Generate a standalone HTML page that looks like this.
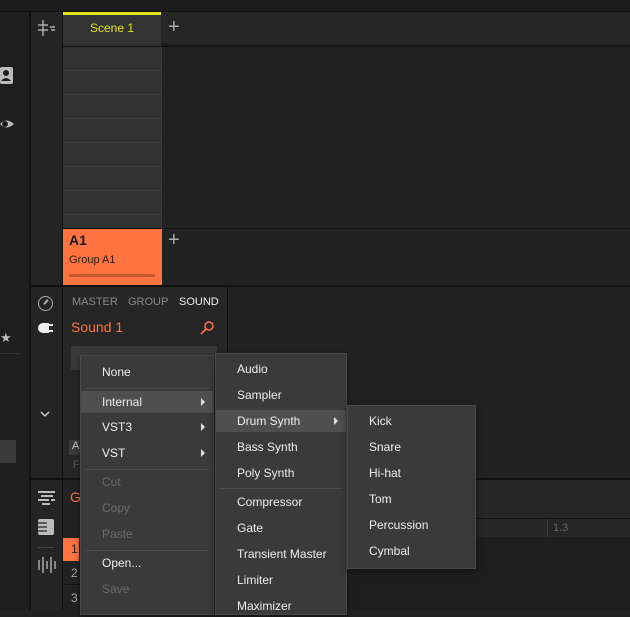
<!DOCTYPE html>
<html><head><style>
*{margin:0;padding:0;box-sizing:border-box}
body{width:630px;height:610px;overflow:hidden;background:#222;font-family:"Liberation Sans",Arial,sans-serif;position:relative}
.a{position:absolute}
.menu{position:absolute;background:#3a3a3a;border:1px solid #4a4a4a;box-shadow:0 2px 6px rgba(0,0,0,.5)}
.it{position:absolute;left:0;right:0;height:22px;color:#eee;font-size:12px;line-height:22px;padding-left:21px}
.it.hl{background:#4f4f4f}
.it.dis{color:#6a6a6a}
.sep{position:absolute;left:4px;right:4px;height:1px;background:#4c4c4c}
.tri{position:absolute;right:8px;top:7px;width:0;height:0;border-left:4px solid #ddd;border-top:4px solid transparent;border-bottom:4px solid transparent}
</style></head><body>
<div class="a" style="left:0;top:0;width:630px;height:11px;background:#1c1c1c"></div>
<div class="a" style="left:0;top:11px;width:630px;height:1px;background:#0e0e0e"></div>
<div class="a" style="left:0;top:12px;width:29px;height:598px;background:#1e1e1e"></div>
<div class="a" style="left:29px;top:12px;width:2px;height:598px;background:#111"></div>
<div class="a" style="left:31px;top:12px;width:31px;height:598px;background:#242424"></div>
<div class="a" style="left:62px;top:12px;width:1px;height:598px;background:#111"></div>
<svg class="a" style="left:0;top:66px" width="14" height="20"><rect x="0" y="1" width="13" height="17" rx="2" fill="#bbb"/><circle cx="6" cy="7" r="3" fill="#1e1e1e"/><path d="M1 15Q6 9 11 15Z" fill="#1e1e1e"/></svg>
<svg class="a" style="left:0;top:116px" width="14" height="16"><path d="M0 8Q6 1 14 8Q6 15 0 8Z" fill="#bbb"/><circle cx="5" cy="8" r="3" fill="#1e1e1e"/></svg>
<div class="a" style="left:0;top:330px;color:#bbb;font-size:13px">★</div>
<div class="a" style="left:0;top:353px;width:20px;height:1px;background:#333"></div>
<div class="a" style="left:0;top:440px;width:16px;height:23px;background:#3a3a3a"></div>
<svg class="a" style="left:36px;top:19px" width="20" height="18"><path d="M7 1V17M2 6H12M2 11H12M14 8H19M15 11H19" stroke="#aaa" stroke-width="1.5"/></svg>
<div class="a" style="left:38px;top:296px;width:15px;height:15px;border:1.5px solid #aaa;border-radius:50%"></div>
<div class="a" style="left:45px;top:299px;width:2px;height:6px;background:#aaa;transform:rotate(40deg)"></div>
<div class="a" style="left:38px;top:323px;width:11px;height:10px;background:#eee;border-radius:5px 0 0 5px"></div>
<div class="a" style="left:48px;top:324px;width:5px;height:2px;background:#eee"></div>
<div class="a" style="left:48px;top:330px;width:5px;height:2px;background:#eee"></div>
<svg class="a" style="left:40px;top:410px" width="10" height="8"><path d="M1 2L5 6L9 2" stroke="#ccc" stroke-width="1.5" fill="none"/></svg>
<svg class="a" style="left:37px;top:490px" width="20" height="16"><path d="M1 2H18M4 6H16M1 10H12M14 10H18M5 14H13" stroke="#eee" stroke-width="1.6"/></svg>
<div class="a" style="left:38px;top:519px;width:16px;height:16px;background:#bbb;border-radius:2px"></div>
<svg class="a" style="left:38px;top:521px" width="12" height="12"><path d="M0 2H9M0 6H9M0 10H9" stroke="#242424" stroke-width="1.3"/></svg>
<div class="a" style="left:38px;top:547px;width:16px;height:1px;background:#444"></div>
<svg class="a" style="left:37px;top:556px" width="20" height="18"><path d="M2 4V14M6 1V17M10 5V13M14 1V17M18 5V13" stroke="#aaa" stroke-width="1.5"/></svg>
<div class="a" style="left:63px;top:12px;width:567px;height:274px;background:#222"></div>
<div class="a" style="left:63px;top:12px;width:98px;height:34px;background:#333;border-top:3px solid #e6e61e"></div>
<div class="a" style="left:63px;top:21px;width:98px;text-align:center;color:#e6e61e;font-size:12px">Scene 1</div>
<div class="a" style="left:161px;top:12px;width:469px;height:32px;background:#262626"></div>
<div class="a" style="left:161px;top:44px;width:469px;height:3px;background:#1a1a1a"></div>
<div class="a" style="left:168px;top:14px;color:#aaa;font-size:20px;line-height:26px">+</div>
<div class="a" style="left:63px;top:46px;width:567px;height:1px;background:#111"></div>
<div class="a" style="left:63px;top:47px;width:98px;height:181px;background:repeating-linear-gradient(#323232 0 23px,#3e3e3e 23px 24px)"></div>
<div class="a" style="left:161px;top:47px;width:1px;height:181px;background:#3a3a3a"></div>
<div class="a" style="left:63px;top:228px;width:567px;height:1px;background:#111"></div>
<div class="a" style="left:63px;top:229px;width:99px;height:56px;background:#ff7340"></div>
<div class="a" style="left:69px;top:232px;color:#1a1a1a;font-size:14px;font-weight:bold">A1</div>
<div class="a" style="left:69px;top:254px;color:#2a1a10;font-size:11px">Group A1</div>
<div class="a" style="left:69px;top:274px;width:86px;height:3px;background:#c85a30"></div>
<div class="a" style="left:168px;top:229px;color:#aaa;font-size:20px;line-height:22px">+</div>
<div class="a" style="left:31px;top:285px;width:599px;height:2px;background:#111"></div>
<div class="a" style="left:63px;top:287px;width:164px;height:192px;background:#262626"></div>
<div class="a" style="left:227px;top:287px;width:1px;height:192px;background:#111"></div>
<div class="a" style="left:72px;top:296px;color:#8a8a8a;font-size:11px;word-spacing:2px">MASTER &nbsp;GROUP</div>
<div class="a" style="left:179px;top:296px;color:#eee;font-size:11px">SOUND</div>
<div class="a" style="left:71px;top:319px;color:#ff7340;font-size:14px">Sound 1</div>
<svg class="a" style="left:199px;top:320px" width="16" height="16"><circle cx="10" cy="6" r="4" stroke="#ff7340" stroke-width="1.5" fill="none"/><path d="M7 9L2 14" stroke="#ff7340" stroke-width="1.8"/></svg>
<div class="a" style="left:71px;top:346px;width:146px;height:24px;background:#3a3a3a"></div>
<div class="a" style="left:69px;top:440px;width:12px;height:15px;background:#3a3a3a;color:#ccc;font-size:11px;padding-left:3px">A</div>
<div class="a" style="left:73px;top:459px;color:#555;font-size:11px">F</div>
<div class="a" style="left:31px;top:478px;width:599px;height:2px;background:#111"></div>
<div class="a" style="left:228px;top:480px;width:402px;height:38px;background:#262626"></div>
<div class="a" style="left:228px;top:518px;width:402px;height:1px;background:#111"></div>
<div class="a" style="left:228px;top:519px;width:402px;height:18px;background:#262626"></div>
<div class="a" style="left:547px;top:519px;width:1px;height:18px;background:#3a3a3a"></div>
<div class="a" style="left:553px;top:522px;color:#666;font-size:11px">1.3</div>
<div class="a" style="left:228px;top:537px;width:402px;height:73px;background:#1e1e1e"></div>
<div class="a" style="left:70px;top:489px;color:#ff7340;font-size:14px">G</div>
<div class="a" style="left:63px;top:538px;width:16px;height:23px;background:#ff7340;color:#222;font-size:12px;line-height:23px;padding-left:8px">1</div>
<div class="a" style="left:71px;top:566px;color:#aaa;font-size:12px">2</div>
<div class="a" style="left:63px;top:584px;width:20px;height:1px;background:#111"></div>
<div class="a" style="left:71px;top:591px;color:#aaa;font-size:12px">3</div>
<div class="menu" style="left:80px;top:355px;width:134px;height:260px">
<div class="it" style="top:5px">None</div>
<div class="sep" style="top:32px"></div>
<div class="it hl" style="top:35px">Internal<span class="tri"></span></div>
<div class="it" style="top:60px">VST3<span class="tri"></span></div>
<div class="it" style="top:86px">VST<span class="tri"></span></div>
<div class="sep" style="top:113px"></div>
<div class="it dis" style="top:115px">Cut</div>
<div class="it dis" style="top:141px">Copy</div>
<div class="it dis" style="top:167px">Paste</div>
<div class="sep" style="top:194px"></div>
<div class="it" style="top:196px">Open...</div>
<div class="it dis" style="top:222px">Save</div>
</div>
<div class="menu" style="left:215px;top:353px;width:132px;height:262px">
<div class="it" style="top:4px">Audio</div>
<div class="it" style="top:30px">Sampler</div>
<div class="it hl" style="top:56px">Drum Synth<span class="tri"></span></div>
<div class="it" style="top:82px">Bass Synth</div>
<div class="it" style="top:108px">Poly Synth</div>
<div class="sep" style="top:134px"></div>
<div class="it" style="top:137px">Compressor</div>
<div class="it" style="top:163px">Gate</div>
<div class="it" style="top:189px">Transient Master</div>
<div class="it" style="top:215px">Limiter</div>
<div class="it" style="top:241px">Maximizer</div>
</div>
<div class="menu" style="left:347px;top:405px;width:129px;height:164px">
<div class="it" style="top:4px">Kick</div>
<div class="it" style="top:30px">Snare</div>
<div class="it" style="top:56px">Hi-hat</div>
<div class="it" style="top:82px">Tom</div>
<div class="it" style="top:108px">Percussion</div>
<div class="it" style="top:134px">Cymbal</div>
</div>
</body></html>
